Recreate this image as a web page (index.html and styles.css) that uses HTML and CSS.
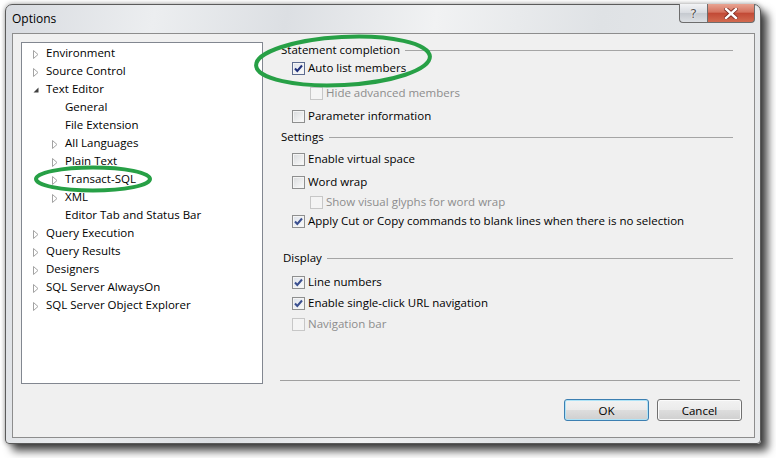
FILE: index.html
```html
<!DOCTYPE html>
<html>
<head>
<meta charset="utf-8">
<link rel="stylesheet" href="styles.css">
</head>
<body>
<div class="window">
  <div class="titlebar">
    <span class="title">Options</span>
    <div class="caption">
      <div class="cbtn help">?</div>
      <div class="cbtn close">
        <svg width="14" height="11" viewBox="0 0 14 11"><path d="M2 1 L12 10 M12 1 L2 10" stroke="#7d2b22" stroke-width="4.2" stroke-linecap="square"/><path d="M2 1 L12 10 M12 1 L2 10" stroke="#fff" stroke-width="2.4" stroke-linecap="square"/></svg>
      </div>
    </div>
  </div>
  <div class="client">
    <div class="main">
      <div class="tree">
        <div class="node"><span class="tw"><svg width="6" height="9" viewBox="0 0 6 9"><path d="M0.5 0.5 L5 4.5 L0.5 8.5 Z" fill="#fff" stroke="#a3a3a3"/></svg></span>Environment</div>
        <div class="node"><span class="tw"><svg width="6" height="9" viewBox="0 0 6 9"><path d="M0.5 0.5 L5 4.5 L0.5 8.5 Z" fill="#fff" stroke="#a3a3a3"/></svg></span>Source Control</div>
        <div class="node"><span class="tw"><svg width="6" height="9" viewBox="0 0 6 9"><path d="M5.5 1.5 L5.5 6.5 L0.5 6.5 Z" fill="#404040"/></svg></span>Text Editor</div>
        <div class="node child"><span class="tw"></span>General</div>
        <div class="node child"><span class="tw"></span>File Extension</div>
        <div class="node child"><span class="tw"><svg width="6" height="9" viewBox="0 0 6 9"><path d="M0.5 0.5 L5 4.5 L0.5 8.5 Z" fill="#fff" stroke="#a3a3a3"/></svg></span>All Languages</div>
        <div class="node child"><span class="tw"><svg width="6" height="9" viewBox="0 0 6 9"><path d="M0.5 0.5 L5 4.5 L0.5 8.5 Z" fill="#fff" stroke="#a3a3a3"/></svg></span>Plain Text</div>
        <div class="node child"><span class="tw"><svg width="6" height="9" viewBox="0 0 6 9"><path d="M0.5 0.5 L5 4.5 L0.5 8.5 Z" fill="#fff" stroke="#a3a3a3"/></svg></span>Transact-SQL</div>
        <div class="node child"><span class="tw"><svg width="6" height="9" viewBox="0 0 6 9"><path d="M0.5 0.5 L5 4.5 L0.5 8.5 Z" fill="#fff" stroke="#a3a3a3"/></svg></span>XML</div>
        <div class="node child"><span class="tw"></span>Editor Tab and Status Bar</div>
        <div class="node"><span class="tw"><svg width="6" height="9" viewBox="0 0 6 9"><path d="M0.5 0.5 L5 4.5 L0.5 8.5 Z" fill="#fff" stroke="#a3a3a3"/></svg></span>Query Execution</div>
        <div class="node"><span class="tw"><svg width="6" height="9" viewBox="0 0 6 9"><path d="M0.5 0.5 L5 4.5 L0.5 8.5 Z" fill="#fff" stroke="#a3a3a3"/></svg></span>Query Results</div>
        <div class="node"><span class="tw"><svg width="6" height="9" viewBox="0 0 6 9"><path d="M0.5 0.5 L5 4.5 L0.5 8.5 Z" fill="#fff" stroke="#a3a3a3"/></svg></span>Designers</div>
        <div class="node"><span class="tw"><svg width="6" height="9" viewBox="0 0 6 9"><path d="M0.5 0.5 L5 4.5 L0.5 8.5 Z" fill="#fff" stroke="#a3a3a3"/></svg></span>SQL Server AlwaysOn</div>
        <div class="node"><span class="tw"><svg width="6" height="9" viewBox="0 0 6 9"><path d="M0.5 0.5 L5 4.5 L0.5 8.5 Z" fill="#fff" stroke="#a3a3a3"/></svg></span>SQL Server Object Explorer</div>
      </div>
      <div class="panel">
        <div class="options">
          <div class="head">Statement completion<span class="rule"></span></div>
          <div class="opt mt0"><span class="cb on focus"><svg width="11" height="11" viewBox="0 0 11 11"><path d="M2 5.5 L4.3 8 L9 2.5" fill="none" stroke="#1f2f7a" stroke-width="2"/></svg></span>Auto list members</div>
          <div class="opt sub dis mt7"><span class="cb"></span>Hide advanced members</div>
          <div class="opt mt5"><span class="cb"></span>Parameter information</div>
          <div class="head mt3">Settings<span class="rule"></span></div>
          <div class="opt mt4"><span class="cb"></span>Enable virtual space</div>
          <div class="opt mt5"><span class="cb"></span>Word wrap</div>
          <div class="opt sub dis mt2"><span class="cb"></span>Show visual glyphs for word wrap</div>
          <div class="opt mt1"><span class="cb on"><svg width="11" height="11" viewBox="0 0 11 11"><path d="M2 5.5 L4.3 8 L9 2.5" fill="none" stroke="#3a4f8f" stroke-width="2"/></svg></span>Apply Cut or Copy commands to blank lines when there is no selection</div>
          <div class="head mt19 ind2">Display<span class="rule"></span></div>
          <div class="opt mt6"><span class="cb on"><svg width="11" height="11" viewBox="0 0 11 11"><path d="M2 5.5 L4.3 8 L9 2.5" fill="none" stroke="#3a4f8f" stroke-width="2"/></svg></span>Line numbers</div>
          <div class="opt mt3"><span class="cb on"><svg width="11" height="11" viewBox="0 0 11 11"><path d="M2 5.5 L4.3 8 L9 2.5" fill="none" stroke="#3a4f8f" stroke-width="2"/></svg></span>Enable single-click URL navigation</div>
          <div class="opt dis mt3"><span class="cb"></span>Navigation bar</div>
        </div>
        <div class="sep"></div>
      </div>
    </div>
    <div class="buttons">
      <div class="btn default">OK</div>
      <div class="btn">Cancel</div>
    </div>
  </div>
</div>
<svg class="annot" width="776" height="458" viewBox="0 0 776 458">
  <ellipse cx="343" cy="61" rx="87" ry="24" transform="rotate(-3 343 61)" fill="none" stroke="#27a046" stroke-width="4"/>
  <ellipse cx="93" cy="179" rx="57" ry="11.5" fill="none" stroke="#27a046" stroke-width="4"/>
</svg>
</body>
</html>
```
FILE: styles.css
```css
html, body {
  margin: 0;
  padding: 0;
  background: #ffffff;
  width: 776px;
  height: 458px;
  overflow: hidden;
}
body {
  position: relative;
  font-family: "Open Sans", "Noto Sans", sans-serif;
  font-size: 11.5px;
  color: #000;
}
.window {
  margin: 4px 0 0 5px;
  width: 754px;
  height: 438px;
  border: 1px solid #5b5b5b;
  border-radius: 7px 7px 4px 4px;
  background: linear-gradient(100deg, #d8dbe0 0%, #eceef0 18%, #dcdfe3 34%, #f1f2f3 52%, #dfe2e5 72%, #e9ebed 100%);
  box-shadow: 0 0 5px rgba(0,0,0,0.4), 7px 7px 8px rgba(0,0,0,0.7);
  display: flex;
  flex-direction: column;
}
.titlebar {
  height: 28px;
  display: flex;
  justify-content: space-between;
  align-items: flex-start;
}
.title {
  padding: 6px 0 0 6px;
  line-height: 16px;
  font-size: 12px;
}
.caption {
  display: flex;
  margin-right: 5px;
  margin-top: -1px;
}
.cbtn {
  height: 18px;
  border: 1px solid #6d6d6d;
  border-top: none;
  display: flex;
  align-items: center;
  justify-content: center;
}
.help {
  width: 27px;
  border-radius: 0 0 0 4px;
  border-right: none;
  background: linear-gradient(#f3f4f6, #d7dadf 50%, #c5c9cf 51%, #dde0e4);
  color: #555;
  font-family: "DejaVu Sans", sans-serif;
  font-size: 13px;
  text-shadow: 0 0 2px #fff, 0 0 1px #fff;
}
.close {
  width: 46px;
  border-radius: 0 0 4px 0;
  background: linear-gradient(#e8a493, #d5735f 45%, #c24a36 52%, #d26a4f 100%);
}
.client {
  margin-left: 6px;
  width: 741px;
  height: 403px;
  border: 1px solid #8d8d8d;
  background: #f0f0f0;
  display: flex;
  flex-direction: column;
}
.main {
  display: flex;
  padding: 8px 0 0 8px;
}
.tree {
  width: 240px;
  height: 339px;
  border: 1px solid #828790;
  background: #fff;
  padding-top: 1px;
  box-sizing: content-box;
}
.node {
  height: 18px;
  display: flex;
  align-items: center;
  padding-left: 11px;
  white-space: nowrap;
  line-height: 16px;
}
.node.child {
  padding-left: 30px;
}
.tw {
  width: 13px;
  height: 9px;
  display: flex;
  align-items: center;
  flex-shrink: 0;
  position: relative;
  top: 1px;
}
.tw svg { display: block; }
.panel {
  margin-left: 17px;
  width: 460px;
  height: 340px;
  display: flex;
  flex-direction: column;
  justify-content: space-between;
}
.options {
  display: flex;
  flex-direction: column;
  padding-right: 7px;
  margin-top: -2px;
}
.head {
  height: 18px;
  display: flex;
  align-items: center;
  padding-left: 1px;
  white-space: nowrap;
}
.head.ind2 { padding-left: 3px; }
.rule {
  flex: 1;
  height: 1px;
  background: #a5a5a5;
  margin-left: 5px;
  margin-top: 2px;
}
.opt {
  height: 18px;
  display: flex;
  align-items: center;
  padding-left: 12px;
  white-space: nowrap;
}
.opt.sub { padding-left: 30px; }
.opt.dis { color: #8d8d8d; }
.cb {
  width: 11px;
  height: 11px;
  border: 1px solid #8e8f8f;
  background: linear-gradient(135deg, #d9dbdd, #fbfbfb);
  box-shadow: inset 0 0 0 1px #f4f4f4;
  margin-right: 3px;
  flex-shrink: 0;
  display: flex;
  align-items: center;
  justify-content: center;
  position: relative;
  top: 1px;
}
.cb svg { display: block; }
.cb.on { background: linear-gradient(135deg, #dde2ea, #fbfbfb); }
.cb.focus { border-color: #5d6c8f; }
.dis .cb {
  border-color: #c7c7c7;
  background: #f4f4f4;
  box-shadow: none;
}
.mt0 { margin-top: 0; }
.mt1 { margin-top: 1px; }
.mt2 { margin-top: 2px; }
.mt3 { margin-top: 3px; }
.mt4 { margin-top: 4px; }
.mt5 { margin-top: 5px; }
.mt6 { margin-top: 6px; }
.mt7 { margin-top: 7px; }
.mt19 { margin-top: 19px; }
.sep {
  height: 1px;
  background: #a0a0a0;
  margin-bottom: 1px;
}
.buttons {
  display: flex;
  justify-content: flex-end;
  gap: 8px;
  padding: 15px 12px 0 0;
}
.btn {
  width: 83px;
  height: 20px;
  border: 1px solid #707070;
  border-radius: 3px;
  background: linear-gradient(#f2f2f2, #ebebeb 48%, #dddddd 52%, #cfcfcf);
  box-shadow: inset 0 0 0 1px #fbfbfb;
  display: flex;
  align-items: center;
  justify-content: center;
  font-size: 11.5px;
}
.btn.default {
  border-color: #3c7fb1;
  box-shadow: inset 0 0 0 1px #aee3f7;
}
.annot {
  position: absolute;
  left: 0;
  top: 0;
  pointer-events: none;
}
```
